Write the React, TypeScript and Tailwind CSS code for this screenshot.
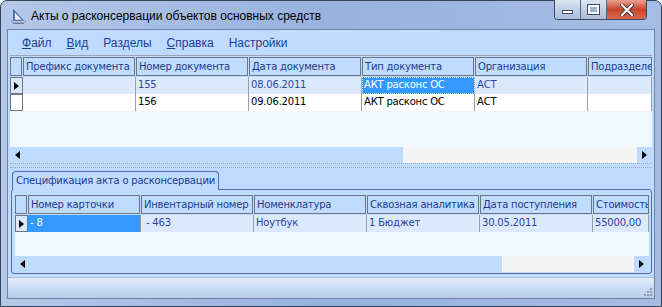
import React from "react";

type Col = { t: string; w: string; hw: string };

const topCols: Col[] = [
  { t: "Префикс документа", w: "w-[113px]", hw: "w-[112px]" },
  { t: "Номер документа", w: "w-[113px]", hw: "w-[112px]" },
  { t: "Дата документа", w: "w-[113px]", hw: "w-[112px]" },
  { t: "Тип документа", w: "w-[113px]", hw: "w-[112px]" },
  { t: "Организация", w: "w-[113px]", hw: "w-[112px]" },
  { t: "Подразделение", w: "flex-1", hw: "flex-1" },
];

const topRows = [
  ["", "155", "08.06.2011", "АКТ расконс ОС", "АСТ", ""],
  ["", "156", "09.06.2011", "АКТ расконс ОС", "АСТ", ""],
];

const specCols: Col[] = [
  { t: "Номер карточки", w: "w-[113px]", hw: "w-[112px]" },
  { t: "Инвентарный номер", w: "w-[113px]", hw: "w-[112px]" },
  { t: "Номенклатура", w: "w-[113px]", hw: "w-[112px]" },
  { t: "Сквозная аналитика", w: "w-[113px]", hw: "w-[112px]" },
  { t: "Дата поступления", w: "w-[113px]", hw: "w-[112px]" },
  { t: "Стоимость", w: "flex-1", hw: "flex-1" },
];

const specRows = [["- 8", " - 463", "Ноутбук", "1 Бюджет", "30.05.2011", "55000,00"]];

function Arrow({ left }: { left?: boolean }) {
  return (
    <svg width="5" height="8" viewBox="0 0 5 8" className={left ? "rotate-180" : ""}>
      <path d="M0 0 L5 4 L0 8 Z" fill="#000" />
    </svg>
  );
}

function ScrollBar({ thumb }: { thumb: string }) {
  return (
    <div className="h-[16px] flex shrink-0">
      <div className="w-[15px] bg-[#bfdbff] flex items-center justify-center">
        <Arrow left />
      </div>
      <div className={`${thumb} bg-[#bfdbff]`} />
      <div className="flex-1 bg-[#f4f4f4]" />
      <div className="w-[15px] bg-[#bfdbff] flex items-center justify-center">
        <Arrow />
      </div>
    </div>
  );
}

function Grid({
  cols,
  rows,
  sel,
  dotted,
  thumb,
  className,
}: {
  cols: Col[];
  rows: string[][];
  sel: [number, number];
  dotted?: boolean;
  thumb: string;
  className: string;
}) {
  return (
    <div className={`flex flex-col bg-[#eff7ff] overflow-hidden tracking-[-0.2px] ${className}`}>
      <div className="h-[21px] pt-[1px] flex shrink-0 bg-[#bfdbff]">
        <div className="w-[12px] h-[19px] border border-[#6f7680] bg-[#bfdbff]" />
        {cols.map((c) => (
          <div
            key={c.t}
            className={`${c.hw} h-[19px] ml-[1px] border border-[#6f7680] bg-[#bfdbff] px-[2px] leading-[17px] text-[#1d3c8c] whitespace-nowrap overflow-hidden`}
          >
            {c.t}
          </div>
        ))}
      </div>
      {rows.map((r, ri) => (
        <div
          key={ri}
          className={`h-[17px] flex shrink-0 ${ri === 0 ? "bg-[#dce8fc] text-[#2b47a3]" : "bg-white text-black"}`}
        >
          <div className="w-[13px] border border-[#6f7680] flex items-center justify-center">
            {ri === 0 && <Arrow />}
          </div>
          {r.map((v, ci) => {
            const s = sel[0] === ri && sel[1] === ci;
            return (
              <div
                key={ci}
                className={`${cols[ci].w} border-r border-[#9aa0a8] px-[2px] leading-[16px] whitespace-pre overflow-hidden ${
                  s ? "bg-[#3399ff] text-white" : ""
                } ${s && dotted ? "outline outline-1 outline-dotted outline-offset-[-1px] outline-[#dfefff]" : ""}`}
              >
                {v}
              </div>
            );
          })}
        </div>
      ))}
      <div className="flex-1" />
      <ScrollBar thumb={thumb} />
    </div>
  );
}

export default function App() {
  return (
    <div className="w-[662px] h-[307px] overflow-hidden font-['DejaVu_Sans',Verdana,sans-serif] text-[10px] bg-white">
      <div className="h-full flex flex-col rounded-t-[7px] border border-[#34455c] bg-gradient-to-r from-[#b4c8e8] via-[#98b2dd] to-[#a6bde3]">
        {/* title bar */}
        <div className="h-[28px] flex shrink-0">
          <div className="flex items-center pl-[9px] pt-[2px] gap-[4px] h-[28px]">
            <svg width="17" height="17" viewBox="0 0 16 16">
              <path d="M3 1 L13 12 L3 12 Z" fill="#2d5ea8" />
              <path d="M4.5 4 L11 11 L4.5 11 Z" fill="#e8f0fa" />
              <path d="M1 12 L15 12 L13 15 L3 15 Z" fill="#6b7f99" />
              <path d="M2 13 L14 13" stroke="#fff" strokeWidth="0.8" />
            </svg>
            <span className="text-[12px] text-black font-['Liberation_Sans',Arial,sans-serif]">
              Акты о расконсервации объектов основных средств
            </span>
          </div>
          <div className="ml-auto mr-[14px] mt-[-1px] flex self-start h-[20px] border border-[#3b4a60] border-t-0 rounded-b-[4px] overflow-hidden">
            <div className="w-[26px] bg-gradient-to-b from-[#dbe5f3] to-[#a9bcd9] flex items-center justify-center border-r border-[#5a6a84]">
              <div className="w-[11px] h-[4px] mt-[5px] bg-white border border-[#3d4a5e]" />
            </div>
            <div className="w-[26px] bg-gradient-to-b from-[#dbe5f3] to-[#a9bcd9] flex items-center justify-center border-r border-[#5a6a84]">
              <div className="w-[11px] h-[9px] border-2 border-white outline outline-1 outline-[#3d4a5e] bg-[#9fb2cf]" />
            </div>
            <div className="w-[39px] bg-gradient-to-b from-[#e8a293] via-[#c9442c] to-[#d76a4f] flex items-center justify-center">
              <svg width="14" height="12" viewBox="0 0 14 12">
                <path d="M2 1 L12 11 M12 1 L2 11" stroke="#3d2a26" strokeWidth="4" strokeLinecap="square" />
                <path d="M2 1 L12 11 M12 1 L2 11" stroke="#fff" strokeWidth="2.2" strokeLinecap="square" />
              </svg>
            </div>
          </div>
        </div>

        {/* client */}
        <div className="h-[270px] mx-[6px] border border-[#6f84a6] bg-[#bfdbff] flex flex-col shrink-0">
          <div className="h-[25px] flex items-center gap-[15px] pl-[14px] text-[#1e3f8f] shrink-0 font-['Liberation_Sans',Arial,sans-serif] text-[12px]">
            <span><u>Ф</u>айл</span>
            <span><u>В</u>ид</span>
            <span>Разделы</span>
            <span><u>С</u>правка</span>
            <span>Настройки</span>
          </div>

          <Grid
            cols={topCols}
            rows={topRows}
            sel={[0, 3]}
            dotted
            thumb="w-[378px]"
            className="h-[108px] mx-[2px] border-t border-[#9aa4b2] shrink-0"
          />

          <div className="h-[5px] mx-[2px] border-y border-dotted border-[#9aa9bd] shrink-0" />

          <div className="h-[109px] flex flex-col pl-[3px] pr-[2px] pt-[3px] shrink-0">
            <div className="w-[207px] h-[19px] ml-[1px] rounded-t-[4px] border border-b-0 border-[#4f6fa8] px-[3px] leading-[18px] tracking-[-0.2px] text-[#1d3c8c] bg-[#bfdbff] whitespace-nowrap relative z-10">
              Спецификация акта о расконсервации
            </div>
            <div className="h-[85px] mt-[-1px] rounded-[3px] border border-[#4f6fa8] pl-[3px] pr-[2px] pt-[4px] pb-[1px] flex flex-col">
              <Grid
                cols={specCols}
                rows={specRows}
                sel={[0, 0]}
                thumb="w-[472px]"
                className="h-[78px] shrink-0"
              />
            </div>
          </div>

          <div className="flex-1 border-t border-[#a9bcd8] bg-gradient-to-b from-[#e4eefa] via-[#cbdcf2] to-[#b8cdea] flex justify-end items-end p-[2px]">
            <svg width="10" height="10" viewBox="0 0 10 10">
              {[
                [8, 2],
                [5, 5],
                [8, 5],
                [2, 8],
                [5, 8],
                [8, 8],
              ].map(([x, y]) => (
                <rect key={`${x}-${y}`} x={x} y={y} width="2" height="2" fill="#8a9cb8" />
              ))}
            </svg>
          </div>
        </div>
      </div>
    </div>
  );
}
